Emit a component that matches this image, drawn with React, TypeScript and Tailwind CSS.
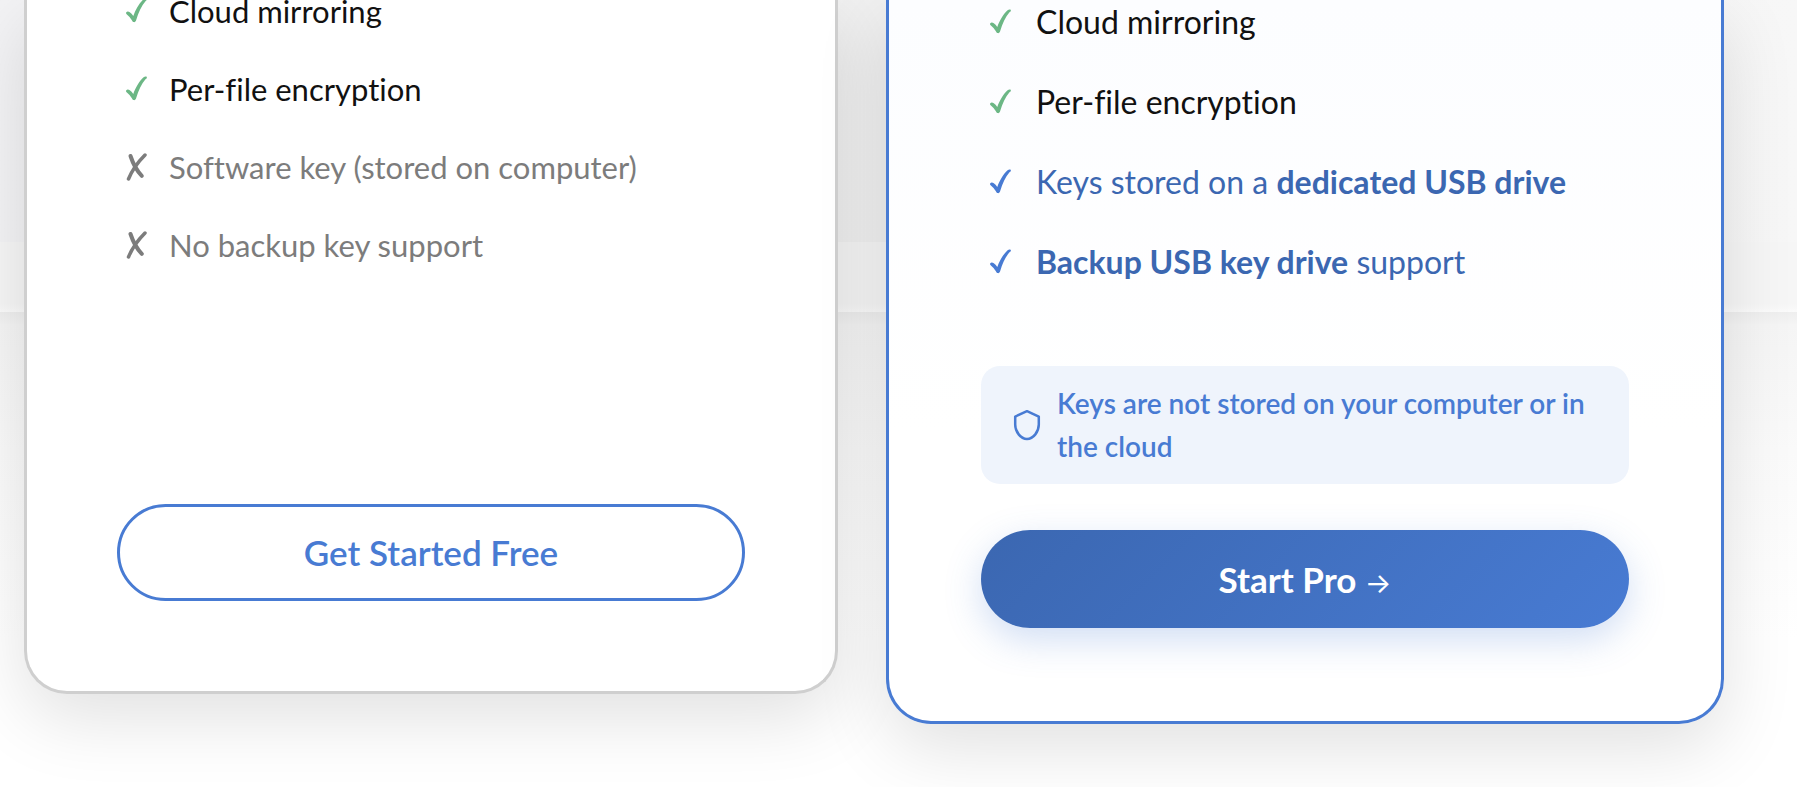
import React from 'react';

interface Feature {
  icon: 'check' | 'cross';
  iconColor: string;
  textColor: string;
  label: React.ReactNode;
}

const freeFeatures: Feature[] = [
  { icon: 'check', iconColor: 'text-[#6cb785]', textColor: 'text-[#111111]', label: 'Cloud mirroring' },
  { icon: 'check', iconColor: 'text-[#6cb785]', textColor: 'text-[#111111]', label: 'Per-file encryption' },
  { icon: 'cross', iconColor: 'text-[#7c7c7c]', textColor: 'text-[#7c7c7c]', label: 'Software key (stored on computer)' },
  { icon: 'cross', iconColor: 'text-[#7c7c7c]', textColor: 'text-[#7c7c7c]', label: 'No backup key support' },
];

const proFeatures: Feature[] = [
  { icon: 'check', iconColor: 'text-[#6cb785]', textColor: 'text-[#111111]', label: 'Cloud mirroring' },
  { icon: 'check', iconColor: 'text-[#6cb785]', textColor: 'text-[#111111]', label: 'Per-file encryption' },
  {
    icon: 'check',
    iconColor: 'text-[#487bd3]',
    textColor: 'text-[#3b67b1]',
    label: <>Keys stored on a <strong className="font-bold">dedicated USB drive</strong></>,
  },
  {
    icon: 'check',
    iconColor: 'text-[#487bd3]',
    textColor: 'text-[#3b67b1]',
    label: <><strong className="font-bold">Backup USB key drive</strong> support</>,
  },
];

const CheckIcon = () => (
  <svg className="h-7 w-6 shrink-0" viewBox="0 0 24 28" fill="currentColor" aria-hidden="true">
    <path d="M1.3 15.2C2.2 14 3.6 14.300 4.800 15.200C6 16.100 7.200 17.400 8.300 18.900C10.500 12.600 14.300 6 18.600 2.200C20 1 22.400 1.300 21.800 2.900C21.600 3.400 21.100 3.700 20.500 4.300C16.500 8.900 13.500 15.200 11.200 23C10.800 24.600 9.800 25.300 8.800 25.100C7.800 24.900 7.300 23.900 6.700 22.900C5.400 20.700 3.800 18.900 1.900 17.400C1 16.700 0.800 16 1.300 15.200Z" />
  </svg>
);

const CrossIcon = () => (
  <svg className="h-7 w-6 shrink-0" viewBox="0 0 24 28" fill="none" stroke="currentColor" strokeLinecap="round" aria-hidden="true">
    <path d="M5.500 3C8 10.500 12 18 16.800 22.800" strokeWidth="4" />
    <path d="M20 2C13.500 8.500 7 17.500 3.500 26" strokeWidth="3.500" />
  </svg>
);

const ShieldIcon = () => (
  <svg className="h-8 w-7 shrink-0" viewBox="0 0 28 32" fill="none" stroke="currentColor" strokeWidth="2.5" strokeLinejoin="round" aria-hidden="true">
    <path d="M14 2.200L25.800 7.600V15.500C25.800 22.500 20.500 30 14 30S2.200 22.500 2.200 15.500V7.600Z" />
  </svg>
);

const FeatureList: React.FC<{ features: Feature[]; className: string; rowClass: string }> = ({ features, className, rowClass }) => (
  <ul className={`flex flex-col pl-2 leading-[48px] ${className}`}>
    {features.map((f, i) => (
      <li key={i} className={`flex items-center ${rowClass} ${f.textColor}`}>
        <span className={f.iconColor}>{f.icon === 'check' ? <CheckIcon /> : <CrossIcon />}</span>
        <span>{f.label}</span>
      </li>
    ))}
  </ul>
);

const App: React.FC = () => {
  return (
    <main className="relative min-h-screen overflow-hidden bg-white font-[Lato,sans-serif] [font-variant-ligatures:none]">
      {/* soft grey backdrop that fades out towards the bottom */}
      <div className="absolute inset-x-0 top-0 flex h-[640px] flex-col" aria-hidden="true">
        <div className="h-[242px] bg-linear-to-r from-[#f3f3f5] via-[#f1f1f1] to-[#f7f7f7]" />
        <div className="h-[62px] bg-[#f6f6f6]" />
        <div className="h-2 bg-linear-to-b from-[#f6f6f6] to-[#fbfbfb]" />
        <div className="h-3 bg-linear-to-b from-[#eeeeee] to-[#f4f4f4]" />
        <div className="flex-1 bg-linear-to-b from-[#f5f5f5] via-[#fafafa] via-40% to-white" />
      </div>

      <div className="relative grid grid-cols-[814fr_838fr] items-start gap-12 pr-[73px] pl-6">
        <section className="rounded-b-[43px] border-3 border-t-0 border-[#cfcfcf] bg-white px-[90px] pb-[90px] shadow-[0_24px_72px_rgba(0,0,0,0.12)]">
          <FeatureList features={freeFeatures} className="-mt-[13px] gap-[30px] text-[31px]" rowClass="gap-5" />
          <button className="mt-[235px] h-[97px] w-full rounded-full border-3 border-[#487bd3] text-[35px] font-semibold text-[#487bd3]">
            Get Started Free
          </button>
        </section>

        <section className="rounded-b-[45px] border-3 border-t-0 border-[#487bd3] bg-linear-to-b from-[#fcfdff] to-white to-60% px-[92px] pb-[93px] shadow-[0_24px_72px_rgba(0,0,0,0.12)]">
          <FeatureList features={proFeatures} className="-mt-0.5 gap-8 text-[32px]" rowClass="gap-[23px]" />
          <div className="mt-20 flex items-center gap-4 rounded-[19px] bg-[#eff4fc] py-4 pr-8 pl-8 text-[28px] leading-[43px] font-semibold text-[#487bd3]">
            <ShieldIcon />
            <p>Keys are not stored on your computer or in the cloud</p>
          </div>
          <button className="mt-[46px] h-[98px] w-full rounded-full bg-linear-135 from-[#3b67b1] to-[#487bd3] text-[35px] font-bold text-white shadow-[0_12px_36px_rgba(72,123,211,0.25)]">
            Start Pro <span className="font-[Inter,sans-serif] text-[28px] font-normal">→</span>
          </button>
        </section>
      </div>
    </main>
  );
};

export default App;
